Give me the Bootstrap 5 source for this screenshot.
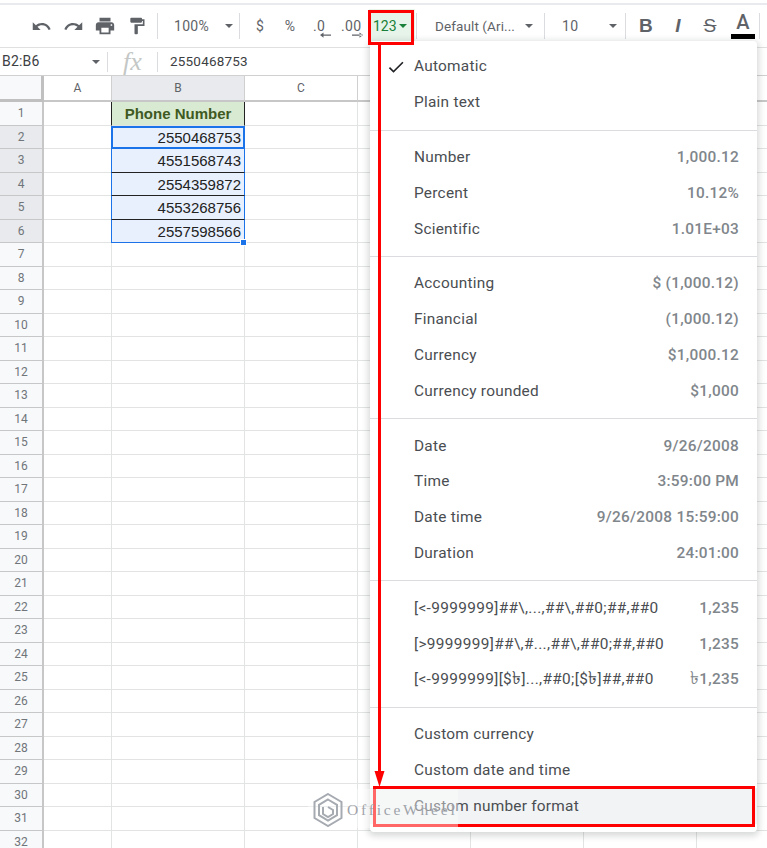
<!DOCTYPE html>
<html>
  <head>
    <title>Custom number format</title>
    <link href="https://cdn.jsdelivr.net/npm/bootstrap@5.3.3/dist/css/bootstrap.min.css" rel="stylesheet">
    <style>
      html, body { height: 848px; overflow: hidden; }
      body { font-family: Roboto, "Liberation Sans", sans-serif; color: #3c4043; background: #fff; position: relative; }

      /* toolbar */
      .top-strip { height: 5px; border-bottom: 2px solid #e8eaed; }
      .tool-row { height: 43px; padding-left: 25px; border-bottom: 1px solid #e0e0e0; font-size: 14px; letter-spacing: .3px; color: #5f6368; }
      .tool { height: 32px; flex: none; }
      .tool svg { fill: #5f6368; display: block; }
      .w-32 { width: 32px; }
      .w-30 { width: 30px; }
      .zoom-tool { width: 81px; }
      .font-tool { width: 127px; }
      .size-tool { width: 80px; }
      .dollar-tool { margin-right: -2px; }
      .color-tool { margin-left: 1px; }
      .tool-sep { width: 1px; height: 26px; background: #dadce0; flex: none; }
      .sep-tight { margin-left: 1px; }
      .caret { width: 0; height: 0; border-left: 4px solid transparent; border-right: 4px solid transparent; border-top: 4px solid #5f6368; flex: none; }
      .caret-green { border-top-color: #188038; margin-left: 2px; }
      .caret-font { margin-left: 12px; }
      .caret-size { margin-left: 31px; }
      .num-btn { width: 46px; height: 34px; margin-left: 3px; padding-left: 4px; flex: none; background: #e6f4ea; color: #188038; font-size: 14px; letter-spacing: 0; }
      .font-name { margin-left: 18px; width: 78px; font-size: 13.5px; letter-spacing: .1px; white-space: nowrap; }
      .size-value { margin-left: 17px; }
      .style-glyph { font-size: 19px; font-family: "Liberation Sans", sans-serif; }
      .bold-a { border-bottom: 5px solid #000; height: 25px; width: 24px; line-height: 16px; font-size: 20px; color: #5f6368; font-weight: 500; }

      /* formula bar */
      .formula-row { height: 28px; border-bottom: 1px solid #d0d0d0; font-size: 13.5px; letter-spacing: .2px; }
      .name-box { width: 107px; padding: 0 7px 0 2px; color: #3c4043; letter-spacing: .2px; font-size: 14px; }
      .fx-mark { width: 49px; font-family: "Liberation Serif", serif; font-style: italic; font-size: 26px; line-height: 26px; color: #c4c7c5; letter-spacing: 0; }
      .formula-text { padding-left: 12px; }
      .formula-sep { height: 20px; }

      /* sheet */
      .sheet-row { display: flex; height: 23.5px; }
      .head-row { height: 26px; }
      .sheet-cell { flex: none; border-right: 1px solid #e2e3e3; border-bottom: 1px solid #e2e3e3; font-family: "Liberation Sans", Arial, sans-serif; font-size: 15px; line-height: 23px; white-space: nowrap; color: #222; }
      .c-r { width: 44px; background: #f8f9fa; border-right: 2px solid #c7c7c7; border-bottom-color: #c7c7c7; text-align: center; font-size: 12px; color: #70757a; font-family: Roboto, sans-serif; }
      .c-a { width: 68px; }
      .c-b { width: 133px; }
      .c-c, .c-d, .c-e, .c-f { width: 113px; }
      .c-g { width: 71px; }
      .col-head { text-align: center; background: #fff; font-size: 12px; color: #5f6368; line-height: 25px; font-family: Roboto, sans-serif; border-bottom: 2px solid #c7c7c7; border-right-color: #d0d0d0; }
      .corner { background: #f8f9fa; border-right: 3px solid #c0c0c0; border-bottom: 3px solid #c0c0c0; }
      .hl { background: #e8eaed; }
      .title-cell { background: #d9ead3; border-left: 1px solid #222; border-right: 1px solid #222; margin-left: -1px; width: 134px; text-align: center; font-weight: 700; color: #3f5a22; }
      .picked { background: #e8f0fd; border-right: 1px solid #1a73e8; border-left: 1px solid #1a73e8; border-bottom: 1px solid #222; margin-left: -1px; width: 134px; text-align: right; padding-right: 3px; }
      .picked.first { border: 2px solid #1a73e8; padding-right: 2px; line-height: 20px; }
      .picked.last { border-bottom: 1px solid #1a73e8; }
      .fill-handle { position: absolute; left: 240px; top: 239px; width: 7px; height: 7px; background: #1a73e8; border: 1px solid #fff; }

      /* format menu */
      .format-menu { display: block; left: 370px; top: 41px; width: 387px; height: 791px; padding: 8px 0 7px; border: 0; border-radius: 4px; box-shadow: 0 2px 6px 2px rgba(60,64,67,.2); font-size: 15.4px; letter-spacing: .25px; }
      .format-menu .dropdown-item { display: flex; justify-content: space-between; align-items: center; height: 35.8px; padding: 0 18px 0 44px; color: #4a4d51; position: relative; }
      .format-menu .sample { color: #80868b; font-weight: 500; }
      .format-menu .dropdown-divider { margin: 9px 0; border-color: #dadce0; opacity: 1; }
      .format-menu .dropdown-item.hovered { background: #f1f3f4; }
      .tick { position: absolute; left: 16px; top: 8px; }
      .pattern { letter-spacing: .35px; }
      .taka { font-size: 1.2em; line-height: 1; }

      /* annotations sit over the menu */
      .red-box { position: absolute; border: 3px solid #f00; z-index: 1010; }
      .red-top { left: 368px; top: 10px; width: 46px; height: 35px; }
      .red-bottom { left: 373px; top: 786px; width: 382px; height: 41px; }
      .red-arrow { position: absolute; left: 372px; top: 44px; z-index: 1010; }
      .wm-veil { position: absolute; left: 308px; top: 789px; width: 150px; height: 39px; background: rgba(255,255,255,.4); z-index: 1011; }
      .wm-logo { position: absolute; left: 313px; top: 793px; z-index: 1012; }
      .wm-text { position: absolute; left: 347px; top: 800px; font-family: "Liberation Serif", serif; font-size: 15.5px; letter-spacing: 2.8px; color: #9fa3aa; line-height: 20px; z-index: 1012; }
    </style>
    <script src="https://cdn.jsdelivr.net/npm/bootstrap@5.3.3/dist/js/bootstrap.bundle.min.js"></script>
  </head>
  <body>
    <div class="top-strip"></div>

    <!-- Toolbar -->
    <div class="tool-row d-flex align-items-center">
      <div class="tool w-32 d-flex align-items-center justify-content-center"><svg width="21" height="21" viewBox="0 0 24 24"><path d="M12.5 8c-2.65 0-5.05.99-6.9 2.6L2 7v9h9l-3.62-3.62c1.39-1.16 3.16-1.88 5.12-1.88 3.54 0 6.55 2.31 7.6 5.5l2.37-.78C21.08 11.03 17.15 8 12.5 8z"/></svg></div>
      <div class="tool w-32 d-flex align-items-center justify-content-center"><svg width="21" height="21" viewBox="0 0 24 24"><path d="M18.4 10.6C16.55 8.99 14.15 8 11.5 8c-4.65 0-8.58 3.03-9.96 7.22L3.9 16c1.05-3.19 4.05-5.5 7.6-5.5 1.95 0 3.73.72 5.12 1.88L13 16h9V7l-3.6 3.6z"/></svg></div>
      <div class="tool w-32 d-flex align-items-center justify-content-center"><svg width="22" height="22" viewBox="0 0 24 24"><path d="M19 8H5c-1.66 0-3 1.34-3 3v6h4v4h12v-4h4v-6c0-1.66-1.34-3-3-3zm-3 11H8v-5h8v5zm3-7c-.55 0-1-.45-1-1s.45-1 1-1 1 .45 1 1-.45 1-1 1zm-1-9H6v4h12V3z"/></svg></div>
      <div class="tool w-32 d-flex align-items-center justify-content-center"><svg width="20" height="20" viewBox="0 0 24 24"><path d="M18 4V3c0-.55-.45-1-1-1H5c-.55 0-1 .45-1 1v4c0 .55.45 1 1 1h12c.55 0 1-.45 1-1V6h1v4H9v11c0 .55.45 1 1 1h2c.55 0 1-.45 1-1v-9h8V4h-3z"/></svg></div>
      <div class="tool-sep ms-1"></div>
      <div class="tool zoom-tool d-flex align-items-center"><span class="ms-3">100%</span><span class="caret ms-3"></span></div>
      <div class="tool-sep"></div>
      <div class="tool w-32 dollar-tool d-flex align-items-center justify-content-center ms-1">$</div>
      <div class="tool w-32 d-flex align-items-center justify-content-center">%</div>
      <div class="tool w-30 d-flex align-items-center justify-content-center">
        <svg width="22" height="30" viewBox="0 0 22 30"><path d="M11 23.500h10v1.300H11zM10 24.100l3.500-2.600v5.200z"/><text x="3" y="19.500" font-family="Roboto, sans-serif" font-size="14" fill="#5f6368">.0</text></svg>
      </div>
      <div class="tool w-30 d-flex align-items-center justify-content-center">
        <svg width="26" height="30" viewBox="0 0 26 30"><path d="M14 23.500h10v1.300H14zM25 24.100l-3.500-2.600v5.200z"/><text x="3" y="19.500" font-family="Roboto, sans-serif" font-size="14" fill="#5f6368">.00</text></svg>
      </div>
      <div class="num-btn d-flex align-items-center"><span>123</span><span class="caret caret-green"></span></div>
      <div class="tool-sep sep-tight"></div>
      <div class="tool font-tool d-flex align-items-center"><span class="font-name">Default (Ari...</span><span class="caret caret-font"></span></div>
      <div class="tool-sep"></div>
      <div class="tool size-tool d-flex align-items-center"><span class="size-value">10</span><span class="caret caret-size"></span></div>
      <div class="tool-sep"></div>
      <div class="tool w-32 ms-1 d-flex align-items-center justify-content-center fw-bold style-glyph">B</div>
      <div class="tool w-32 d-flex align-items-center justify-content-center fw-bold fst-italic style-glyph">I</div>
      <div class="tool w-32 d-flex align-items-center justify-content-center style-glyph text-decoration-line-through">S</div>
      <div class="tool w-32 color-tool d-flex align-items-start justify-content-center pt-1"><div class="bold-a text-center">A</div></div>
      <div class="tool-sep"></div>
    </div>

    <!-- Formula bar -->
    <div class="formula-row d-flex align-items-center">
      <div class="name-box d-flex align-items-center justify-content-between"><span>B2:B6</span><span class="caret"></span></div>
      <div class="tool-sep formula-sep"></div>
      <div class="fx-mark text-center">fx</div>
      <div class="tool-sep formula-sep"></div>
      <div class="formula-text">2550468753</div>
    </div>

    <!-- Sheet, rows filled in below -->
    <div id="sheetAnchor"></div>
    <div class="fill-handle"></div>

    <!-- Number format menu -->
    <div class="dropdown-menu format-menu">
      <a class="dropdown-item"><svg class="tick" width="20" height="20" viewBox="0 0 24 24"><path fill="#202124" d="M9 16.17L4.83 12l-1.42 1.41L9 19 21 7l-1.41-1.41z"/></svg><span>Automatic</span></a>
      <a class="dropdown-item"><span>Plain text</span></a>
      <hr class="dropdown-divider">
      <a class="dropdown-item"><span>Number</span><span class="sample">1,000.12</span></a>
      <a class="dropdown-item"><span>Percent</span><span class="sample">10.12%</span></a>
      <a class="dropdown-item"><span>Scientific</span><span class="sample">1.01E+03</span></a>
      <hr class="dropdown-divider">
      <a class="dropdown-item"><span>Accounting</span><span class="sample">$ (1,000.12)</span></a>
      <a class="dropdown-item"><span>Financial</span><span class="sample">(1,000.12)</span></a>
      <a class="dropdown-item"><span>Currency</span><span class="sample">$1,000.12</span></a>
      <a class="dropdown-item"><span>Currency rounded</span><span class="sample">$1,000</span></a>
      <hr class="dropdown-divider">
      <a class="dropdown-item"><span>Date</span><span class="sample">9/26/2008</span></a>
      <a class="dropdown-item"><span>Time</span><span class="sample">3:59:00 PM</span></a>
      <a class="dropdown-item"><span>Date time</span><span class="sample">9/26/2008 15:59:00</span></a>
      <a class="dropdown-item"><span>Duration</span><span class="sample">24:01:00</span></a>
      <hr class="dropdown-divider">
      <a class="dropdown-item"><span class="pattern">[&lt;-9999999]##\,...,##\,##0;##,##0</span><span class="sample">1,235</span></a>
      <a class="dropdown-item"><span class="pattern">[&gt;9999999]##\,#...,##\,##0;##,##0</span><span class="sample">1,235</span></a>
      <a class="dropdown-item"><span class="pattern">[&lt;-9999999][$<span class="taka">৳</span>]...,##0;[$<span class="taka">৳</span>]##,##0</span><span class="sample"><span class="taka">৳</span>1,235</span></a>
      <hr class="dropdown-divider">
      <a class="dropdown-item"><span>Custom currency</span></a>
      <a class="dropdown-item"><span>Custom date and time</span></a>
      <a class="dropdown-item hovered"><span>Custom number format</span></a>
    </div>

    <!-- Red annotations and watermark -->
    <div class="red-box red-top"></div>
    <svg class="red-arrow" width="16" height="744" viewBox="0 0 16 744"><rect x="6" y="0" width="3" height="728" fill="#f00"/><path d="M2.500 727h10L7.500 743z" fill="#f00"/></svg>
    <div class="red-box red-bottom"></div>
    <div class="wm-veil"></div>
    <svg class="wm-logo" width="30" height="34" viewBox="0 0 30 34" fill="none" stroke="#a6aab1" stroke-width="2"><path d="M15 1l13.500 8v16L15 33 1.500 25V9z"/><path d="M15 6.500l9 5.300v10.400L15 27.500l-9-5.300V11.800z"/><path d="M10 14v7l5 3 5-3v-4l-5-3"/></svg>
    <div class="wm-text">OfficeWheel</div>

    <script>
      // Function to build one sheet row, extra classes per column
      function createSheetRow(rowLabel, rowClass, cellB) {
        let row = document.createElement("div");
        row.setAttribute("class", "sheet-row");
        row.innerHTML =
          `<div class="sheet-cell c-r ${rowClass}">${rowLabel}</div>` +
          `<div class="sheet-cell c-a"></div>` + cellB +
          `<div class="sheet-cell c-c"></div><div class="sheet-cell c-d"></div>` +
          `<div class="sheet-cell c-e"></div><div class="sheet-cell c-f"></div><div class="sheet-cell c-g"></div>`;
        document.getElementById("sheetAnchor").appendChild(row);
      }

      // header row with the column letters
      let headRow = document.createElement("div");
      headRow.setAttribute("class", "sheet-row head-row");
      headRow.innerHTML =
        `<div class="sheet-cell c-r corner"></div><div class="sheet-cell col-head c-a">A</div>` +
        `<div class="sheet-cell col-head c-b hl">B</div><div class="sheet-cell col-head c-c">C</div>` +
        `<div class="sheet-cell col-head c-d">D</div><div class="sheet-cell col-head c-e">E</div>` +
        `<div class="sheet-cell col-head c-f">F</div><div class="sheet-cell col-head c-g">G</div>`;
      document.getElementById("sheetAnchor").appendChild(headRow);

      const phones = ["2550468753", "4551568743", "2554359872", "4553268756", "2557598566"];

      createSheetRow(1, "", `<div class="sheet-cell title-cell">Phone Number</div>`);
      phones.forEach((phone, i) => {
        let extra = i === 0 ? "first" : (i === phones.length - 1 ? "last" : "");
        createSheetRow(i + 2, "hl", `<div class="sheet-cell picked ${extra}">${phone}</div>`);
      });
      for (let n = 7; n <= 32; n++) {
        createSheetRow(n, "", `<div class="sheet-cell c-b"></div>`);
      }
    </script>
  </body>
</html>
